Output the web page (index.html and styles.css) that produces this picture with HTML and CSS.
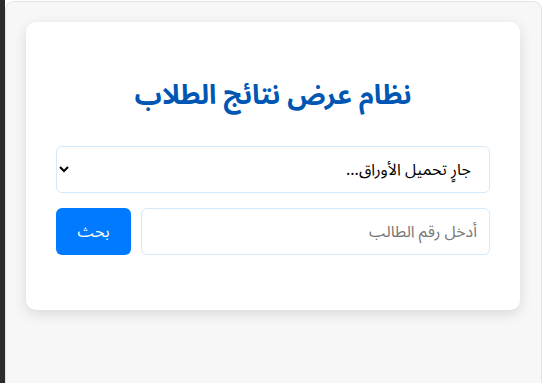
FILE: index.html
```html
<!DOCTYPE html>
<html lang="ar" dir="rtl">
<head>
<meta charset="utf-8">
<title>نظام عرض نتائج الطلاب</title>
<link rel="stylesheet" href="styles.css">
</head>
<body>
<div class="frame">
  <div class="panel">
    <div class="card">
      <h1 class="title">نظام عرض نتائج الطلاب</h1>
      <select class="sheet-select">
        <option>جارٍ تحميل الأوراق...</option>
      </select>
      <div class="search-row">
        <input class="student-input" type="text" placeholder="أدخل رقم الطالب">
        <button class="search-btn" type="button">بحث</button>
      </div>
    </div>
  </div>
  <div class="gutter"></div>
</div>
</body>
</html>
```
FILE: styles.css
```css
html, body {
  margin: 0;
  padding: 0;
  height: 100%;
  background: #ffffff;
  font-family: "Noto Sans Arabic", "DejaVu Sans", sans-serif;
}
.frame {
  display: flex;
  height: 100%;
}
.gutter {
  width: 5px;
  background: #2b2b2b;
  flex: none;
}
.panel {
  flex: 1;
  min-width: 0;
  margin-top: 1px;
  margin-right: 2px;
  border: 1px solid #e2e2e2;
  border-bottom: none;
  border-radius: 9px 9px 0 0;
  background: #f7f7f7;
  padding: 20px 21px 20px 20px;
}
.card {
  min-width: 0;
  background: #ffffff;
  border-radius: 10px;
  box-shadow: 0 4px 14px rgba(0, 0, 0, 0.12);
  padding: 30px 30px 55px 30px;
}
.title {
  margin: 22px 0 28px;
  text-align: center;
  color: #0056b3;
  font-size: 27px;
  font-weight: bold;
  line-height: 44px;
}
.sheet-select {
  display: block;
  width: 100%;
  min-width: 0;
  max-width: 100%;
  height: 47px;
  padding: 0 14px;
  font-family: inherit;
  font-size: 16px;
  color: #000;
  background: #fff;
  border: 1px solid #d3e9fc;
  border-radius: 6px;
  box-sizing: border-box;
}
.search-row {
  display: flex;
  gap: 10px;
  margin-top: 15px;
}
.student-input {
  flex: 1;
  width: 0;
  min-width: 0;
  height: 47px;
  padding: 0 12px;
  font-family: inherit;
  font-size: 16px;
  border: 1px solid #d3e9fc;
  border-radius: 6px;
  box-sizing: border-box;
}
.student-input::placeholder {
  color: #777;
}
.search-btn {
  flex: none;
  width: 75px;
  height: 47px;
  border: none;
  border-radius: 6px;
  background: #007bff;
  color: #fff;
  font-family: inherit;
  font-size: 16px;
}
```
